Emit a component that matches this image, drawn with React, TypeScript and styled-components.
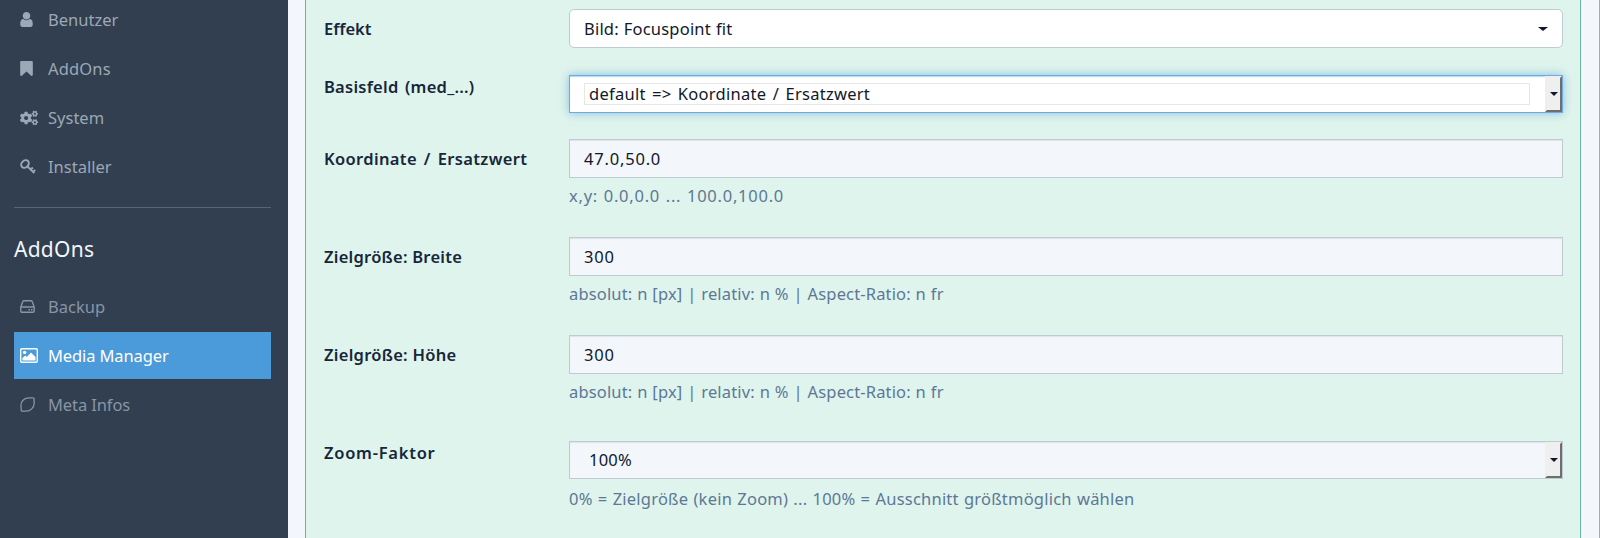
import React from "react";
import styled, { createGlobalStyle } from "styled-components";
import { FaCogs } from "react-icons/fa";

const Global = createGlobalStyle`
  * { box-sizing: border-box; }
  body { margin: 0; overflow: hidden; font-family: "Noto Sans", sans-serif; font-size: 16.5px; color: #16202e; }
`;

const Page = styled.div`
  display: flex;
  height: 538px;
  overflow: hidden;
  background: #f3f6fb;
`;

const Sidebar = styled.nav`
  width: 288px;
  flex: none;
  padding: 0 17px 0 14px;
  background: #323f50;
`;

const NavList = styled.ul<{ $shift?: number }>`
  list-style: none;
  margin: ${(p) => p.$shift ?? 0}px 0 0;
  padding: 0;
  display: flex;
  flex-direction: column;
  gap: 2px;
`;

const NavItem = styled.li<{ $active?: boolean; $dim?: boolean }>`
  display: flex;
  align-items: center;
  height: 47px;
  padding-left: 6px;
  background: ${(p) => (p.$active ? "#4b9ad9" : "transparent")};
  color: ${(p) => (p.$active ? "#fff" : p.$dim ? "#8795a5" : "#9ca8b6")};
`;

const IconCell = styled.span`
  display: flex;
  align-items: center;
  width: 28px;
  flex: none;
`;

const Text = styled.span<{ $ls?: number; $ws?: number }>`
  letter-spacing: ${(p) => p.$ls ?? 0}px;
  word-spacing: ${(p) => p.$ws ?? 0}px;
  line-height: 24px;
  white-space: nowrap;
`;

const Divider = styled.hr`
  height: 1px;
  margin: 17px 0 0;
  border: 0;
  background: #566579;
`;

const Heading = styled.h4`
  margin: 25px 0 18px;
  line-height: 32px;
  font-size: 21px;
  font-weight: 400;
  color: #f3f6fb;
`;

const Main = styled.main`
  flex: 1;
  display: flex;
  padding: 0 18px 0 17px;
  border-right: 1px solid #a9a9ae;
`;

const Panel = styled.form`
  flex: 1;
  padding: 9px 17px 0 18px;
  background: #dff4ec;
  border: solid #6bb59d;
  border-width: 0 1px;
`;

const Row = styled.div<{ $h: number }>`
  display: grid;
  grid-template-columns: 245px 1fr;
  height: ${(p) => p.$h}px;
  align-items: start;
`;

const Label = styled.label<{ $top?: number }>`
  padding-top: ${(p) => p.$top ?? 8}px;
  font-weight: 600;
  color: #17263a;
`;

const Field = styled.div<{ $h?: number; $kind?: "button" | "focus" }>`
  display: flex;
  align-items: center;
  justify-content: space-between;
  height: ${(p) => p.$h ?? 39}px;
  padding-left: 14px;
  color: #10182a;
  border: 1px solid ${(p) => (p.$kind === "focus" ? "#6fabe0" : "#bfcbd2")};
  border-radius: ${(p) => (p.$kind === "button" ? 5 : 0)}px;
  background: ${(p) => (p.$kind ? "#fff" : "#f3f6fb")};
  box-shadow: ${(p) =>
    p.$kind === "focus"
      ? "inset 0 1px 1px rgba(75,154,217,.4), 0 0 9px rgba(75,154,217,.6)"
      : p.$kind
        ? "none"
        : "inset 0 1px 1px rgba(0,0,0,.08)"};
`;

const Option = styled.span<{ $framed?: boolean }>`
  display: flex;
  align-items: center;
  flex: 1;
  height: 22px;
  margin-right: 15px;
  padding-left: 4px;
  border: 1px solid ${(p) => (p.$framed ? "#e6e6e6" : "transparent")};
`;

const Spin = styled.span`
  display: flex;
  align-items: center;
  justify-content: center;
  align-self: stretch;
  width: 17px;
  background: #efefef;
  border: 2px solid #efefef;
  border-right-color: #6e6e6e;
  border-bottom-color: #6e6e6e;
`;

const Caret = styled.span<{ $w?: number }>`
  border: solid transparent;
  border-width: 4px ${(p) => p.$w ?? 4}px 0;
  border-top-color: #101828;
`;

const ButtonCaret = styled(Caret)`
  margin-right: 14px;
`;

const Help = styled.div<{ $top?: number }>`
  padding-top: ${(p) => p.$top ?? 6}px;
  color: #5d7896;
`;

const UserIcon = () => (
  <svg width="13" height="15" viewBox="0 0 1280 1536" fill="currentColor">
    <path d="M1280 1271q0 109-62.5 187t-150.5 78h-854q-88 0-150.5-78t-62.5-187q0-85 8.5-160.5t31.5-152 58.5-131 94-89 134.5-34.5q131 128 313 128t313-128q76 0 134.5 34.5t94 89 58.5 131 31.5 152 8.5 160.5zm-256-887q0 159-112.5 271.5t-271.5 112.5-271.5-112.5-112.5-271.5 112.5-271.5 271.5-112.5 271.5 112.5 112.5 271.5z" />
  </svg>
);

const BookmarkIcon = () => (
  <svg width="13" height="15" viewBox="0 0 1280 1520" fill="currentColor">
    <path d="M1164 0q23 0 44 9 33 13 52.5 41t19.500 62v1289q0 34-19.500 62t-52.500 41q-19 8-44 8-48 0-83-32l-441-424-441 424q-36 33-83 33-23 0-44-9-33-13-52.500-41t-19.500-62v-1289q0-34 19.500-62t52.500-41q21-9 44-9h1048z" />
  </svg>
);

const KeyIcon = () => (
  <svg width="17" height="16" viewBox="0 0 17 16" fill="none" stroke="currentColor">
    <ellipse cx="5" cy="5" rx="4.200" ry="3.300" strokeWidth="2" transform="rotate(-45 5 5)" />
    <path d="M7.300 7.300l7 6.800M10.800 10.500l2-2M13.200 12.900l2-2" strokeWidth="1.900" />
  </svg>
);

const DriveIcon = () => (
  <svg width="15" height="13" viewBox="0 0 15 13" fill="none" stroke="currentColor" strokeWidth="1.4">
    <path d="M.8 7L2.700 1.700Q3 .7 4 .7h7q1 0 1.300 1L14.200 7v4q0 1.300-1.300 1.300H2.100Q.8 12.300.8 11zM.8 7h13.400" />
    <path d="M8.500 9.700h1.500M11 9.700h1.500" strokeWidth="1.500" />
  </svg>
);

const PictureIcon = () => (
  <svg width="18" height="15" viewBox="0 0 18 15" fill="currentColor">
    <rect x=".7" y=".7" width="16.600" height="13.600" rx="1.200" fill="none" stroke="currentColor" strokeWidth="1.400" />
    <circle cx="4.600" cy="4.400" r="1.700" />
    <path d="M2.500 12.500V10l2.800-2.600 1.500 1.500L11 4.500l4.500 4.500v3.500z" />
  </svg>
);

const LemonIcon = () => (
  <svg width="15" height="15" viewBox="0 0 15 15" fill="none" stroke="currentColor" strokeWidth="1.300">
    <path d="M.9 8.500C.9 4 4.500.8 9 .8c1.800 0 2.500.3 3.700.1 1-.1 1.600.6 1.400 1.500-.2 1.200.2 2 .1 3.800-.2 4.500-3.700 8-8 8-1.400 0-2-.3-3.300 0-1.200.2-2-.6-1.700-1.700.2-1.300-.3-2.400-.3-4z" />
  </svg>
);

export default function App() {
  return (
    <Page>
      <Global />
      <Sidebar>
        <NavList $shift={-4}>
          <NavItem><IconCell><UserIcon /></IconCell><Text>Benutzer</Text></NavItem>
          <NavItem><IconCell><BookmarkIcon /></IconCell><Text $ls={0.15}>AddOns</Text></NavItem>
          <NavItem><IconCell><FaCogs size={18} /></IconCell><Text>System</Text></NavItem>
          <NavItem><IconCell><KeyIcon /></IconCell><Text>Installer</Text></NavItem>
        </NavList>
        <Divider />
        <Heading><Text $ls={0.25}>AddOns</Text></Heading>
        <NavList>
          <NavItem $dim><IconCell><DriveIcon /></IconCell><Text>Backup</Text></NavItem>
          <NavItem $active><IconCell><PictureIcon /></IconCell><Text $ls={-0.12}>Media Manager</Text></NavItem>
          <NavItem $dim><IconCell><LemonIcon /></IconCell><Text $ls={-0.1}>Meta Infos</Text></NavItem>
        </NavList>
      </Sidebar>
      <Main>
        <Panel>
          <Row $h={66}>
            <Label><Text>Effekt</Text></Label>
            <Field $kind="button"><Text $ls={0.2} $ws={0.5}>Bild: Focuspoint fit</Text><ButtonCaret $w={5} /></Field>
          </Row>
          <Row $h={64}>
            <Label $top={0}><Text $ls={0.25} $ws={2}>Basisfeld (med_...)</Text></Label>
            <Field $kind="focus" $h={38}>
              <Option $framed><Text $ls={0.27} $ws={1.8}>default =&gt; Koordinate / Ersatzwert</Text></Option>
              <Spin><Caret /></Spin>
            </Field>
          </Row>
          <Row $h={98}>
            <Label><Text $ls={0.35} $ws={2.3}>Koordinate / Ersatzwert</Text></Label>
            <div><Field><Text $ls={0.8}>47.0,50.0</Text></Field><Help><Text $ls={0.75} $ws={0.7}>x,y: 0.0,0.0 ... 100.0,100.0</Text></Help></div>
          </Row>
          <Row $h={98}>
            <Label><Text $ls={0.25}>Zielgröße: Breite</Text></Label>
            <div><Field><Text $ls={0.8}>300</Text></Field><Help><Text $ls={0.15} $ws={0.4}>absolut: n [px] | relativ: n % | Aspect-Ratio: n fr</Text></Help></div>
          </Row>
          <Row $h={106}>
            <Label><Text $ls={0.27}>Zielgröße: Höhe</Text></Label>
            <div><Field><Text $ls={0.8}>300</Text></Field><Help><Text $ls={0.15} $ws={0.4}>absolut: n [px] | relativ: n % | Aspect-Ratio: n fr</Text></Help></div>
          </Row>
          <Row $h={97}>
            <Label $top={0}><Text $ls={0.75}>Zoom-Faktor</Text></Label>
            <div>
              <Field $h={38}><Option><Text $ls={0.2}>100%</Text></Option><Spin><Caret /></Spin></Field>
              <Help $top={8}><Text $ls={0.22} $ws={0.7}>0% = Zielgröße (kein Zoom) ... 100% = Ausschnitt größtmöglich wählen</Text></Help>
            </div>
          </Row>
        </Panel>
      </Main>
    </Page>
  );
}
